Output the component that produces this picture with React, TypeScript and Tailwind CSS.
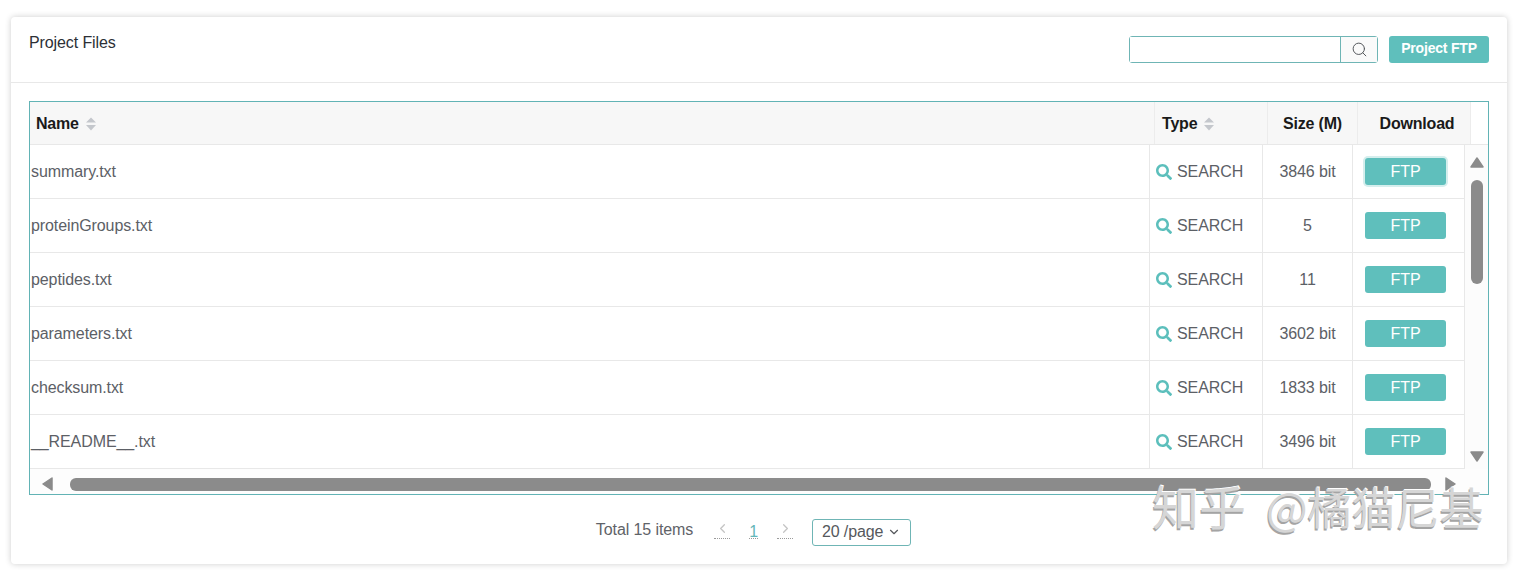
import { FaSearch } from "react-icons/fa";
import { ChevronDown, ChevronLeft, ChevronRight, Search } from "lucide-react";

const files = [
  { name: "summary.txt", size: "3846 bit" },
  { name: "proteinGroups.txt", size: "5" },
  { name: "peptides.txt", size: "11" },
  { name: "parameters.txt", size: "3602 bit" },
  { name: "checksum.txt", size: "1833 bit" },
  { name: "__README__.txt", size: "3496 bit" },
];

const SortIcon = () => (
  <svg width="10" height="14" viewBox="0 0 10 14" className="ml-[7px]">
    <path d="M5 0.5 L10 5.5 H0 Z" fill="#c4c7cc" />
    <path d="M5 13.5 L10 8 H0 Z" fill="#c4c7cc" />
  </svg>
);

const Triangle = ({ points, className }: { points: string; className: string }) => (
  <svg width="14" height="14" viewBox="0 0 14 14" className={className}>
    <polygon points={points} fill="#8b8b8b" stroke="#8b8b8b" strokeWidth="1.5" strokeLinejoin="round" />
  </svg>
);

const HeaderCell = ({ label, className }: { label: string; className: string }) => (
  <div className={`flex items-center border-r border-[#ececec] pt-[2px] font-bold tracking-[-0.2px] text-[#1a1a1a] ${className}`}>
    {label}
    {label === "Name" || label === "Type" ? <SortIcon /> : null}
  </div>
);

export default function App() {
  return (
    <div className="h-[573px] overflow-hidden bg-white px-[11px] pt-[17px] font-['Liberation_Sans',Arial,sans-serif] text-[16px] tracking-[-0.1px]">
      <div className="relative h-[547px] w-[1496px] rounded-[4px] bg-white shadow-[0_0_6px_rgba(0,0,0,0.2)]">
        <div className="flex h-[66px] items-start justify-between border-b border-[#e8e8e8] pl-[18px] pr-[18px]">
          <h2 className="pt-[17px] text-[16px] leading-[18px] text-[#2c3036]">Project Files</h2>
          <div className="flex items-start pt-[19px]">
            <div className="flex h-[27px] w-[249px] rounded-[3px] border border-[#6fb5b5]">
              <input className="w-[211px] border-r border-[#6fb5b5] bg-white outline-none" aria-label="Search" />
              <div className="flex flex-1 items-center justify-center bg-[#fafafa] text-[#55585c]">
                <Search size={17} strokeWidth={1.4} />
              </div>
            </div>
            <button className="ml-[11px] h-[27px] w-[100px] rounded-[3px] bg-[#5fbfbc] pb-[3px] text-[14px] font-bold tracking-[-0.2px] text-white">
              Project FTP
            </button>
          </div>
        </div>

        <div className="mx-[18px] mt-[18px] h-[394px] w-[1460px] border border-b-2 border-[#62b3b5]">
          <div className="flex h-[43px] border-b border-[#e8e8e8]">
            <div className="flex w-[1441px] bg-[#f7f7f7]">
              <HeaderCell label="Name" className="w-[1125px] pl-[6px]" />
              <HeaderCell label="Type" className="w-[113px] pl-[7px]" />
              <HeaderCell label="Size (M)" className="w-[90px] justify-center" />
              <HeaderCell label="Download" className="w-[113px] justify-center pl-[6px]" />
            </div>
          </div>

          <div className="flex h-[324px]">
            <div className="w-[1435px]">
              {files.map((file, i) => (
                <div key={file.name} className="flex h-[54px] border-b border-[#e8e8e8] text-[#5c6066]">
                  <div className="flex w-[1120px] items-center border-r border-[#e8e8e8] pl-px">{file.name}</div>
                  <div className="flex w-[113px] items-center border-r border-[#e8e8e8] pl-[6px]">
                    <FaSearch size={16} className="mr-[5px] text-[#5cbfbc]" />
                    SEARCH
                  </div>
                  <div className="flex w-[90px] items-center justify-center border-r border-[#e8e8e8]">{file.size}</div>
                  <div className="flex w-[112px] items-center justify-center border-r border-[#e8e8e8] pr-[6px]">
                    <button
                      className={`h-[27px] w-[81px] rounded-[3px] bg-[#5fbfbc] tracking-normal text-white ${
                        i === 0 ? "shadow-[0_0_0_2px_#d5eeed]" : ""
                      }`}
                    >
                      FTP
                    </button>
                  </div>
                </div>
              ))}
            </div>
            <div className="flex w-[23px] flex-col items-center bg-[#fcfcfc] pl-px pt-[11px]">
              <Triangle points="7,2 13,11 1,11" className="shrink-0" />
              <div className="mt-[10px] h-[104px] w-[12px] shrink-0 rounded-[6px] bg-[#8b8b8b]" />
              <Triangle points="1,3 13,3 7,12" className="mt-[165px] shrink-0" />
            </div>
          </div>

          <div className="flex h-[25px] items-end bg-[#fdfdfd] pb-[3px] pl-[10px]">
            <Triangle points="12,1 12,13 3,7" className="" />
            <div className="ml-[16px] h-[13px] w-[1361px] rounded-[6px] bg-[#8b8b8b]" />
            <Triangle points="3,1 3,13 12,7" className="ml-[12px]" />
          </div>
        </div>

        <div className="flex h-[69px] items-start justify-center pr-[11px] pt-[24px] text-[#5f6368]">
          <span className="leading-[22px]">Total 15 items</span>
          <span className="ml-[21px] flex h-[20px] w-[16px] items-center justify-center border-b border-dotted border-[#9a9a9a] text-[#c4c4c4]">
            <ChevronLeft size={15} />
          </span>
          <span className="ml-[19px] flex h-[20px] w-[9px] items-start justify-center border-b border-dotted border-[#9a9a9a] pt-[3px] leading-[20px] text-[#63b6b8]">
            1
          </span>
          <span className="ml-[19px] flex h-[20px] w-[16px] items-center justify-center border-b border-dotted border-[#9a9a9a] text-[#c4c4c4]">
            <ChevronRight size={15} />
          </span>
          <div className="ml-[19px] flex h-[27px] w-[99px] items-center justify-center rounded-[3px] border border-[#6fb5b5] pb-px text-[#55585c]">
            20 /page
            <ChevronDown size={14} className="ml-[4px]" />
          </div>
        </div>

        <div className="pointer-events-none absolute left-[1141px] top-[460px] flex items-baseline whitespace-nowrap font-['Noto_Sans_CJK_SC',sans-serif] leading-[56px] tracking-normal text-[#d6d6d6] [text-shadow:-1px_2px_0_#a4a4a4,1px_-1px_0_#ffffff]">
          <span className="text-[47px]">知乎</span>
          <span className="ml-[20px] text-[44px]">@橘猫尼基</span>
        </div>
      </div>
    </div>
  );
}
